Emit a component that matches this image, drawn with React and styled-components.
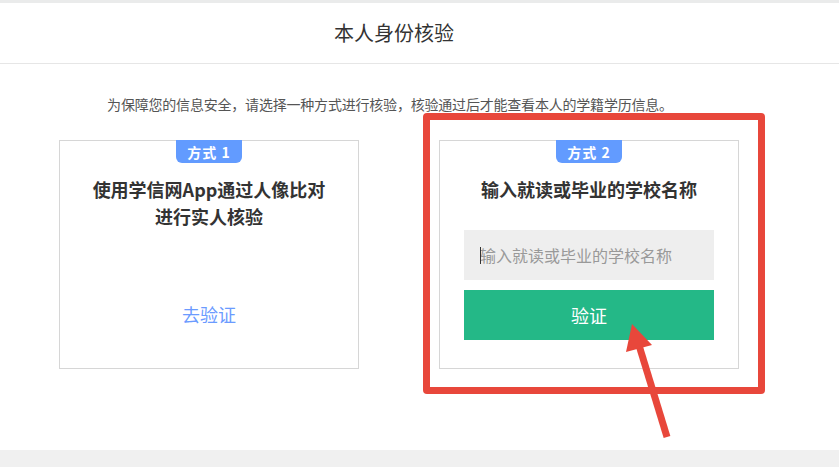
import React from 'react';
import styled, {createGlobalStyle} from 'styled-components';

const GlobalStyle = createGlobalStyle`
  html, body {
    margin: 0;
    padding: 0;
    background: #f0f0f0;
  }
  body {
    font-family: "Noto Sans CJK SC", "Liberation Sans", sans-serif;
    color: #333;
  }
`;

const methods = [
  { id: 1, title: ['使用学信网App通过人像比对', '进行实人核验'] },
  { id: 2, title: ['输入就读或毕业的学校名称'] },
];

const App = () => {
  return (
    <>
      <GlobalStyle />
      <Page>
        <TopStrip />
        <Header>
          <HeaderInner>
            <PageTitle>本人身份核验</PageTitle>
          </HeaderInner>
        </Header>
        <Main>
          <Content>
            <Notice>为保障您的信息安全，请选择一种方式进行核验，核验通过后才能查看本人的学籍学历信息。</Notice>
            <Cards>
              {methods.map((m) => (
                <Card key={`method-${m.id}`}>
                  <Badge>方式 {m.id}</Badge>
                  <CardTitle>
                    {m.title.map((line) => <div key={line}>{line}</div>)}
                  </CardTitle>
                  {m.id === 1 ? (
                    <GoLink href="#">去验证</GoLink>
                  ) : (
                    <>
                      <InputWrap>
                        <Caret />
                        <SchoolInput placeholder="输入就读或毕业的学校名称" />
                      </InputWrap>
                      <VerifyButton>验证</VerifyButton>
                    </>
                  )}
                </Card>
              ))}
            </Cards>
          </Content>
          {/* annotation drawn over the screenshot */}
          <Highlight />
          <Arrow width="60" height="130" viewBox="0 0 60 130">
            <line x1="47" y1="125" x2="18" y2="30" stroke="#e8473b" strokeWidth="7" />
            <polygon points="12,12 6,40 32,33" fill="#e8473b" />
          </Arrow>
        </Main>
      </Page>
    </>
  );
};

const Page = styled.div`
  width: 839px;
  min-height: 467px;
  background: #f0f0f0;
`;

const TopStrip = styled.div`
  height: 3px;
  background: #eaebeb;
`;

const Header = styled.div`
  height: 60px;
  background: #fff;
  border-bottom: 1px solid #e6e6e6;
`;

const HeaderInner = styled.div`
  width: 670px;
  margin-left: 59px;
  height: 100%;
  display: flex;
  align-items: center;
  justify-content: center;
`;

const PageTitle = styled.h1`
  margin: 0;
  font-size: 20px;
  font-weight: normal;
  color: #333;
  line-height: 1;
  padding-bottom: 1px;
`;

const Main = styled.div`
  position: relative;
  height: 386px;
  background: #fff;
`;

const Content = styled.div`
  width: 680px;
  margin-left: 59px;
  padding-top: 30px;
`;

const Notice = styled.p`
  margin: 0 18px 0 0;
  font-size: 14px;
  line-height: 20px;
  color: #555;
  text-align: center;
  letter-spacing: -0.2px;
  white-space: nowrap;
`;

const Cards = styled.div`
  display: flex;
  justify-content: space-between;
  margin-top: 26px;
`;

const Card = styled.div`
  width: 298px;
  height: 227px;
  border: 1px solid #d6d6d6;
  display: flex;
  flex-direction: column;
  align-items: center;
  background: #fff;
`;

const Badge = styled.div`
  width: 66px;
  height: 23px;
  margin-top: -1px;
  background: #629bff;
  color: #fff;
  font-size: 14px;
  font-weight: bold;
  letter-spacing: 1px;
  border-radius: 0 0 6px 6px;
  display: flex;
  align-items: center;
  justify-content: center;
`;

const CardTitle = styled.div`
  margin-top: 13px;
  font-size: 18px;
  font-weight: bold;
  line-height: 27px;
  color: #333;
  text-align: center;
`;

const GoLink = styled.a`
  margin-top: 71px;
  font-size: 18px;
  line-height: 27px;
  color: #6b9bff;
  text-decoration: none;
`;

const InputWrap = styled.div`
  position: relative;
  margin-top: 27px;
  width: 250px;
  height: 50px;
`;

const Caret = styled.span`
  position: absolute;
  left: 16px;
  top: 17px;
  width: 1px;
  height: 17px;
  background: #333;
`;

const SchoolInput = styled.input`
  box-sizing: border-box;
  width: 100%;
  height: 100%;
  border: none;
  outline: none;
  background: #eeeeee;
  padding: 0 16px;
  font-family: "Noto Sans CJK SC", "Liberation Sans", sans-serif;
  font-size: 16px;
  color: #333;
  &::placeholder {
    color: #999;
  }
`;

const VerifyButton = styled.button`
  margin-top: 10px;
  width: 250px;
  height: 50px;
  border: none;
  background: #24b887;
  color: #fff;
  font-family: "Noto Sans CJK SC", "Liberation Sans", sans-serif;
  font-size: 18px;
  cursor: pointer;
`;

const Highlight = styled.div`
  position: absolute;
  left: 423px;
  top: 49px;
  width: 328px;
  height: 267px;
  border: 7px solid #e8473b;
  border-radius: 4px;
  pointer-events: none;
`;

const Arrow = styled.svg`
  position: absolute;
  left: 620px;
  top: 248px;
  pointer-events: none;
`;

export default App;
